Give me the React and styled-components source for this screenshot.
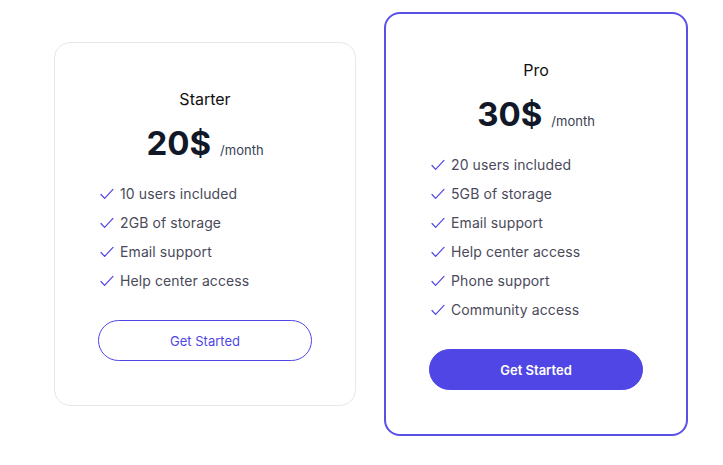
import styled, { createGlobalStyle } from "styled-components";

const GlobalStyle = createGlobalStyle`
  * { box-sizing: border-box; }
  body {
    margin: 0;
    background: #ffffff;
    font-family: Inter, "Noto Sans", sans-serif;
  }
`;

const plans = [
  {
    name: "Starter",
    price: "20$",
    features: ["10 users included", "2GB of storage", "Email support", "Help center access"],
    featured: false,
  },
  {
    name: "Pro",
    price: "30$",
    features: [
      "20 users included",
      "5GB of storage",
      "Email support",
      "Help center access",
      "Phone support",
      "Community access",
    ],
    featured: true,
  },
];

function CheckIcon() {
  return (
    <svg width="14" height="12" viewBox="0 0 14 12" fill="none">
      <path d="M1 6.5 L4.6 10.4 L13 1.4" stroke="#4f46e5" strokeWidth="1.2" strokeLinecap="round" strokeLinejoin="round" />
    </svg>
  );
}

export default function App() {
  return (
    <>
      <GlobalStyle />
      <Page>
        {plans.map((plan) => (
          <Card key={plan.name} featured={plan.featured}>
            <Title>{plan.name}</Title>
            <PriceRow>
              <Price>{plan.price}</Price>
              <Period>/month</Period>
            </PriceRow>
            <Features>
              {plan.features.map((f) => (
                <Feature key={f}>
                  <CheckIcon />
                  <span>{f}</span>
                </Feature>
              ))}
            </Features>
            <Button featured={plan.featured}>Get Started</Button>
          </Card>
        ))}
      </Page>
    </>
  );
}

const Page = styled.div`
  display: flex;
  flex-direction: row;
  align-items: center;
  gap: 28px;
  padding: 12px 0 0 54px;
`;

const Card = styled.div.withConfig({ shouldForwardProp: (p) => p !== "featured" })`
  width: ${(p) => (p.featured ? "304px" : "302px")};
  padding: 44px 43px;
  border: ${(p) => (p.featured ? "2px solid #5b50e6" : "1px solid #e5e7eb")};
  border-radius: 16px;
  background: #ffffff;
  display: flex;
  flex-direction: column;
`;

const Title = styled.div`
  text-align: center;
  font-size: 16px;
  line-height: 24px;
  font-weight: 400;
  color: #111111;
`;

const PriceRow = styled.div`
  display: flex;
  justify-content: center;
  align-items: baseline;
  gap: 9px;
  margin-top: 12px;
  height: 40px;
`;

const Price = styled.span`
  font-size: 33px;
  line-height: 40px;
  font-weight: 700;
  color: #111827;
`;

const Period = styled.span`
  font-size: 13px;
  color: #374151;
`;

const Features = styled.ul`
  list-style: none;
  margin: 21px 0 0;
  padding: 0 0 0 2px;
  display: flex;
  flex-direction: column;
  gap: 9px;
`;

const Feature = styled.li`
  display: flex;
  align-items: center;
  gap: 6px;
  font-size: 14px;
  line-height: 20px;
  color: #4a4a5a;
  letter-spacing: 0.1px;
`;

const Button = styled.button.withConfig({ shouldForwardProp: (p) => p !== "featured" })`
  margin-top: 29px;
  width: 100%;
  height: 41px;
  border-radius: 999px;
  border: 1px solid #4f46e5;
  background: ${(p) => (p.featured ? "#4f46e5" : "#ffffff")};
  color: ${(p) => (p.featured ? "#ffffff" : "#4f46e5")};
  font-family: Inter, "Noto Sans", sans-serif;
  font-size: 13px;
  font-weight: ${(p) => (p.featured ? 600 : 400)};
  cursor: pointer;
`;
